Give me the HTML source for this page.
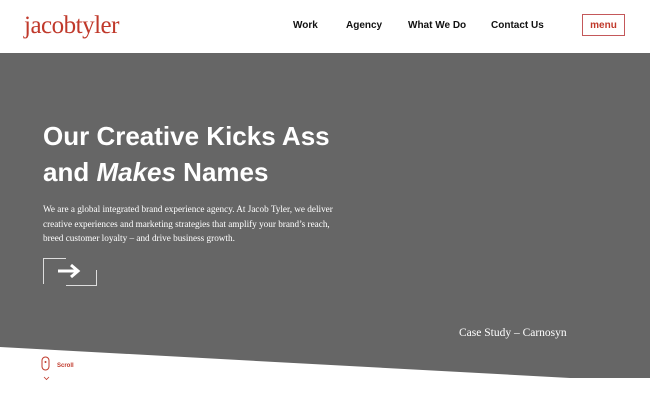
<!DOCTYPE html>
<html><head><style>
body{margin:0;width:650px;height:406px;overflow:hidden;background:#fff;position:relative;font-family:"Liberation Sans",sans-serif}
.logo{position:absolute;left:24px;top:12px;font-family:"Liberation Serif",serif;font-size:25px;color:#c0392b;letter-spacing:-0.5px}
.nav a{position:absolute;top:20px;font-size:10px;font-weight:bold;color:#111;text-decoration:none}
.menu{position:absolute;left:582px;top:14px;border:1px solid #c4585a;color:#c0392b;font-size:10px;font-weight:bold;box-sizing:border-box;width:43px;height:22px;display:flex;align-items:center;justify-content:center}
h1{position:absolute;left:43px;top:118px;margin:0;color:#fff;font-size:26px;line-height:36px;font-weight:bold}
p{position:absolute;left:43px;top:202px;margin:0;width:300px;color:#fff;font-family:"Liberation Serif",serif;font-size:9.2px;line-height:14.6px}
.cs{position:absolute;left:459px;top:327px;color:#fff;font-family:"Liberation Serif",serif;font-size:11.5px}
</style></head><body>
<svg width="650" height="406" style="position:absolute;left:0;top:0">
<polygon points="0,53 650,53 650,378 570,378 0,347" fill="#666"/>
<g stroke="#ddd" stroke-width="1" fill="none">
<path d="M66,258.5H43.5V284"/><path d="M66,285.5H96.5V270"/>
</g>
<path d="M58,271H77M71,265L78,271L71,277" stroke="#fff" stroke-width="3" fill="none"/>
<rect x="42" y="357" width="7" height="13" rx="3.5" stroke="#c0392b" fill="none"/>
<circle cx="45.5" cy="362" r="1" fill="#c0392b"/>
<path d="M44,377L46.5,379.5L49,377" stroke="#c0392b" stroke-width="0.8" fill="none"/>
<text x="57" y="367" font-size="6" font-weight="bold" fill="#c0392b" font-family="Liberation Sans">Scroll</text>
</svg>
<div class="logo">jacobtyler</div>
<div class="nav"><a style="left:293px">Work</a><a style="left:346px">Agency</a><a style="left:408px">What We Do</a><a style="left:491px">Contact Us</a></div>
<div class="menu">menu</div>
<h1>Our Creative Kicks Ass<br>and <i>Makes</i> Names</h1>
<p>We are a global integrated brand experience agency. At Jacob Tyler, we deliver creative experiences and marketing strategies that amplify your brand’s reach, breed customer loyalty – and drive business growth.</p>
<div class="cs">Case Study – Carnosyn</div>
</body></html>
